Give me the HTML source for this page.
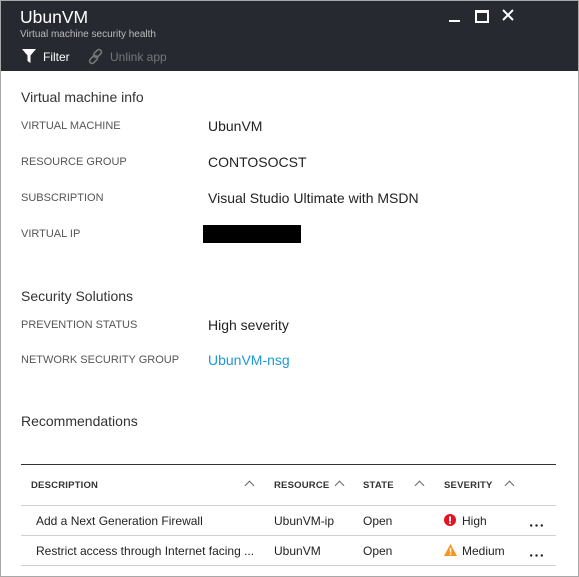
<html><head><style>
body{margin:0;width:579px;height:577px;font-family:"Liberation Sans",sans-serif;background:#fff;position:relative;overflow:hidden}
.frame{position:absolute;left:0;top:0;width:577px;height:575px;border:1px solid #a8a8a8}
.hdr{position:absolute;left:1px;top:1px;width:577px;height:70px;background:#262a30}
.a{position:absolute;white-space:nowrap}
.lbl{font-size:11px;color:#555}
.val{font-size:14px;color:#222}
.sec{font-size:14px;color:#333}
.th{font-size:9.5px;font-weight:bold;color:#333;letter-spacing:.2px}
.td{font-size:12px;color:#222}
.line{position:absolute;left:21px;width:535px;height:1px;background:#d0d0d0}
.car{position:absolute;width:6px;height:6px;border-left:1px solid #666;border-top:1px solid #666;transform:rotate(45deg)}
</style></head><body>
<div class="frame"></div>
<div class="hdr"></div>
<div class="a" style="left:20px;top:7px;font-size:17.5px;color:#fff">UbunVM</div>
<div class="a" style="left:20px;top:29px;font-size:10px;color:#bbb">Virtual machine security health</div>
<svg class="a" style="left:22px;top:49px" width="14" height="14" viewBox="0 0 14 14"><path d="M0 0H14L8.5 6.5V14L5.5 12V6.5Z" fill="#fff"/></svg>
<div class="a" style="left:43px;top:50px;font-size:12px;color:#fff">Filter</div>
<svg class="a" style="left:88px;top:48px" width="17" height="17" viewBox="0 0 17 17"><g fill="none" stroke="#777" stroke-width="1.6"><rect x="7" y="1" width="5" height="9" rx="2.5" transform="rotate(45 9.5 5.5)"/><rect x="3" y="7" width="5" height="9" rx="2.5" transform="rotate(45 5.5 11.5)"/></g></svg>
<div class="a" style="left:110px;top:50px;font-size:12px;color:#777">Unlink app</div>
<div class="a" style="left:449px;top:20px;width:11px;height:2px;background:#fff"></div>
<div class="a" style="left:475px;top:10px;width:10px;height:8px;border:2px solid #fff;border-top-width:3px"></div>
<svg class="a" style="left:502px;top:9px" width="12" height="12"><path d="M1 1L11 11M11 1L1 11" stroke="#fff" stroke-width="2"/></svg>

<div class="a sec" style="left:21px;top:89px">Virtual machine info</div>
<div class="a lbl" style="left:21px;top:120px">VIRTUAL MACHINE</div><div class="a val" style="left:208px;top:118px">UbunVM</div>
<div class="a lbl" style="left:21px;top:156px">RESOURCE GROUP</div><div class="a val" style="left:208px;top:154px">CONTOSOCST</div>
<div class="a lbl" style="left:21px;top:192px">SUBSCRIPTION</div><div class="a val" style="left:208px;top:190px">Visual Studio Ultimate with MSDN</div>
<div class="a lbl" style="left:21px;top:228px">VIRTUAL IP</div><div class="a" style="left:203px;top:225px;width:98px;height:18px;background:#000"></div>

<div class="a sec" style="left:21px;top:288px">Security Solutions</div>
<div class="a lbl" style="left:21px;top:319px">PREVENTION STATUS</div><div class="a val" style="left:208px;top:317px">High severity</div>
<div class="a lbl" style="left:21px;top:354px">NETWORK SECURITY GROUP</div><div class="a val" style="left:208px;top:352px;color:#1c9ad6">UbunVM-nsg</div>

<div class="a sec" style="left:21px;top:413px">Recommendations</div>
<div class="a" style="left:21px;top:464px;width:535px;height:1px;background:#333"></div>
<div class="a th" style="left:31px;top:480px">DESCRIPTION</div><div class="car" style="left:246px;top:482px"></div>
<div class="a th" style="left:274px;top:480px">RESOURCE</div><div class="car" style="left:336px;top:482px"></div>
<div class="a th" style="left:363px;top:480px">STATE</div><div class="car" style="left:416px;top:482px"></div>
<div class="a th" style="left:444px;top:480px">SEVERITY</div><div class="car" style="left:506px;top:482px"></div>
<div class="line" style="top:505px"></div>
<div class="a td" style="left:36px;top:514px">Add a Next Generation Firewall</div>
<div class="a td" style="left:274px;top:514px">UbunVM-ip</div>
<div class="a td" style="left:363px;top:514px">Open</div>
<svg class="a" style="left:444px;top:514px" width="12" height="12"><circle cx="6" cy="6" r="6" fill="#e81123"/><rect x="5" y="2.5" width="2" height="5" fill="#fff"/><rect x="5" y="8.5" width="2" height="1.5" fill="#fff"/></svg>
<div class="a td" style="left:462px;top:514px">High</div>
<svg class="a" style="left:530px;top:524px" width="14" height="3"><circle cx="1.2" cy="1.5" r="1.2" fill="#222"/><circle cx="6.5" cy="1.5" r="1.2" fill="#222"/><circle cx="11.8" cy="1.5" r="1.2" fill="#222"/></svg>
<div class="line" style="top:535px"></div>
<div class="a td" style="left:36px;top:544px">Restrict access through Internet facing ...</div>
<div class="a td" style="left:274px;top:544px">UbunVM</div>
<div class="a td" style="left:363px;top:544px">Open</div>
<svg class="a" style="left:444px;top:544px" width="13" height="12"><path d="M6.5 0L13 12H0Z" fill="#f7941d"/><rect x="5.8" y="4" width="1.5" height="4.5" fill="#fff"/><rect x="5.8" y="9.5" width="1.5" height="1.5" fill="#fff"/></svg>
<div class="a td" style="left:462px;top:544px">Medium</div>
<svg class="a" style="left:530px;top:554px" width="14" height="3"><circle cx="1.2" cy="1.5" r="1.2" fill="#222"/><circle cx="6.5" cy="1.5" r="1.2" fill="#222"/><circle cx="11.8" cy="1.5" r="1.2" fill="#222"/></svg>
<div class="line" style="top:565px"></div>
</body></html>
